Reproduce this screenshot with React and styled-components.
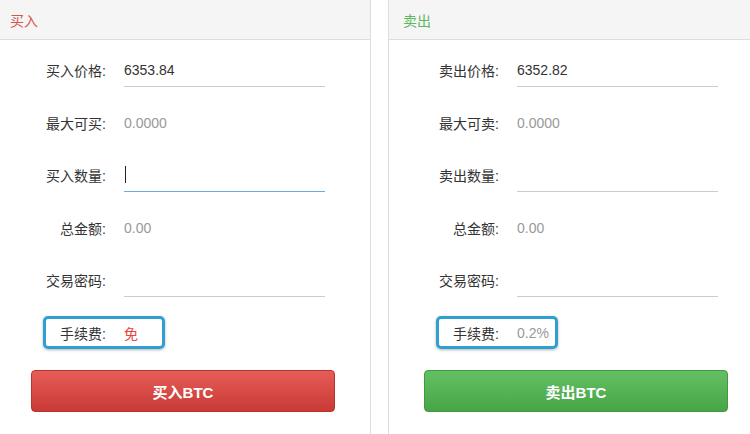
import styled, { createGlobalStyle } from "styled-components";

const GlobalStyle = createGlobalStyle`
  html, body {
    margin: 0;
    padding: 0;
    background: #fff;
    overflow: hidden;
  }
  body {
    font-family: "Liberation Sans", "Noto Sans CJK SC", sans-serif;
    font-size: 14px;
    color: #333;
  }
`;

const themes = {
  buy: {
    title: "#d9534f",
    fee: "#e8433c",
    top: "#e85c57",
    bottom: "#c73a36",
    border: "#b8322e",
  },
  sell: {
    title: "#5cb85c",
    fee: "#999",
    top: "#63c063",
    bottom: "#47a447",
    border: "#3f993f",
  },
};

const Page = styled.div`
  display: flex;
  gap: 17px;
  margin-left: -1px;
  height: 434px;
`;

const Panel = styled.section`
  flex: 0 0 370px;
  border-left: 1px solid #ddd;
  border-right: 1px solid #ddd;
  height: 100%;
`;

const Header = styled.div`
  height: 39px;
  background: #f5f5f5;
  border-bottom: 1px solid #ddd;
  display: flex;
  align-items: center;
  padding-left: ${(p) => p.$indent}px;
  font-size: 14px;
  color: ${(p) => p.$color};
`;

const Body = styled.div`
  padding: 4px 0 0 ${(p) => p.$indent}px;
`;

const Row = styled.div`
  position: relative;
  height: 52.5px;
  display: flex;
  align-items: center;
`;

const Highlight = styled.div`
  position: absolute;
  left: 12px;
  top: 9px;
  width: 116px;
  height: 27px;
  border: 3px solid #2e9fd0;
  border-radius: 5px;
  box-shadow: 0 1px 3px rgba(0, 0, 0, 0.3);
  pointer-events: none;
`;

const Label = styled.div`
  width: 75px;
  margin-right: 18px;
  text-align: right;
  white-space: nowrap;
  color: #333;
`;

const Value = styled.div`
  color: ${(p) => p.$color || "#999"};
`;

const Field = styled.div`
  width: 201px;
  height: 34px;
  box-sizing: border-box;
  display: flex;
  align-items: center;
  border-bottom: 1px solid ${(p) => (p.$focused ? "#6fa8dc" : "#ccc")};
  color: #333;
`;

const Caret = styled.span`
  display: inline-block;
  width: 1px;
  height: 17px;
  background: #222;
  margin-left: 1px;
`;

const Button = styled.button`
  margin-top: 11px;
  width: 304px;
  height: 42px;
  border: 1px solid ${(p) => p.$t.border};
  border-radius: 4px;
  background: linear-gradient(${(p) => p.$t.top}, ${(p) => p.$t.bottom});
  color: #fff;
  font-family: "Liberation Sans", "Noto Sans CJK SC", sans-serif;
  font-size: 15px;
  font-weight: bold;
  cursor: pointer;
`;

function TradePanel({ kind, title, verb, price, max, focused, fee, indent }) {
  const t = themes[kind];
  return (
    <Panel>
      <Header $color={t.title} $indent={indent - 21}>
        {title}
      </Header>
      <Body $indent={indent}>
        <Row>
          <Label>{verb}价格:</Label>
          <Field>{price}</Field>
        </Row>
        <Row>
          <Label>最大可{verb.slice(0, 1)}:</Label>
          <Value>{max}</Value>
        </Row>
        <Row>
          <Label>{verb}数量:</Label>
          <Field $focused={focused}>{focused && <Caret />}</Field>
        </Row>
        <Row>
          <Label>总金额:</Label>
          <Value>0.00</Value>
        </Row>
        <Row>
          <Label>交易密码:</Label>
          <Field />
        </Row>
        <Row>
          <Highlight />
          <Label>手续费:</Label>
          <Value $color={t.fee}>{fee}</Value>
        </Row>
        <Button $t={t}>{verb}BTC</Button>
      </Body>
    </Panel>
  );
}

export default function App() {
  return (
    <>
      <GlobalStyle />
      <Page>
        <TradePanel
          kind="buy"
          title="买入"
          verb="买入"
          price="6353.84"
          max="0.0000"
          focused
          fee="免"
          indent={31}
        />
        <TradePanel
          kind="sell"
          title="卖出"
          verb="卖出"
          price="6352.82"
          max="0.0000"
          fee="0.2%"
          indent={35}
        />
      </Page>
    </>
  );
}
